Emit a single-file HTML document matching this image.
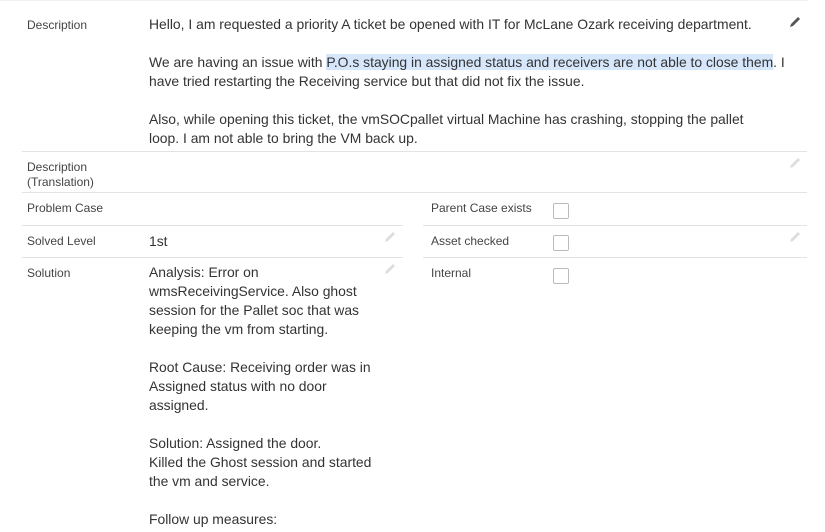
<!DOCTYPE html>
<html><head><style>
body{margin:0;width:825px;height:532px;background:#fff;font-family:"Liberation Sans",sans-serif;color:#333;position:relative;overflow:hidden}
.a{position:absolute;white-space:nowrap}
.l{font-size:12px;color:#444}
.v{font-size:13.9px;color:#333;line-height:19px}
.h{position:absolute;height:1px;background:#e3e3e3}
.cb{position:absolute;width:14px;height:14px;border:1px solid #bbb;border-radius:2px;background:#fff}
.pen{position:absolute}
</style></head><body>
<div class="h" style="left:0;top:0;width:808px;background:#f0f0f0"></div>
<div class="a l" style="left:27px;top:18px">Description</div>
<div class="a v" style="left:149px;top:15px">Hello, I am requested a priority A ticket be opened with IT for McLane Ozark receiving department.</div>
<div class="a v" style="left:149px;top:53px">We are having an issue with <span style="background:#d6e6fb">P.O.s staying in assigned status and receivers are not able to close them</span>. I</div>
<div class="a v" style="left:149px;top:72px">have tried restarting the Receiving service but that did not fix the issue.</div>
<div class="a v" style="left:149px;top:110px">Also, while opening this ticket, the vmSOCpallet virtual Machine has crashing, stopping the pallet</div>
<div class="a v" style="left:149px;top:129px">loop. I am not able to bring the VM back up.</div>
<svg class="pen" style="left:788px;top:15px" width="14" height="14" viewBox="0 0 14 14"><path d="M2 12 L3 9 L10 2 L12 4 L5 11 Z" fill="#555"/></svg>
<div class="h" style="left:22px;top:151px;width:785px"></div>
<div class="a l" style="left:27px;top:160px;line-height:15px">Description<br>(Translation)</div>
<svg class="pen" style="left:788px;top:156px" width="14" height="14" viewBox="0 0 14 14"><path d="M2 12 L3 9 L10 2 L12 4 L5 11 Z" fill="#ddd"/></svg>
<div class="h" style="left:22px;top:192px;width:785px"></div>
<div class="a l" style="left:27px;top:201px">Problem Case</div>
<div class="a l" style="left:431px;top:201px">Parent Case exists</div>
<div class="cb" style="left:553px;top:203px"></div>
<div class="h" style="left:22px;top:225px;width:381px"></div>
<div class="h" style="left:423px;top:225px;width:384px"></div>
<div class="a l" style="left:27px;top:234px">Solved Level</div>
<div class="a v" style="left:149px;top:232px">1st</div>
<svg class="pen" style="left:383px;top:230px" width="14" height="14" viewBox="0 0 14 14"><path d="M2 12 L3 9 L10 2 L12 4 L5 11 Z" fill="#ddd"/></svg>
<div class="a l" style="left:431px;top:234px">Asset checked</div>
<div class="cb" style="left:553px;top:235px"></div>
<svg class="pen" style="left:788px;top:230px" width="14" height="14" viewBox="0 0 14 14"><path d="M2 12 L3 9 L10 2 L12 4 L5 11 Z" fill="#ddd"/></svg>
<div class="h" style="left:22px;top:257px;width:381px"></div>
<div class="h" style="left:423px;top:257px;width:384px"></div>
<div class="a l" style="left:27px;top:266px">Solution</div>
<svg class="pen" style="left:383px;top:262px" width="14" height="14" viewBox="0 0 14 14"><path d="M2 12 L3 9 L10 2 L12 4 L5 11 Z" fill="#ddd"/></svg>
<div class="a l" style="left:431px;top:266px">Internal</div>
<div class="cb" style="left:553px;top:268px"></div>
<div class="a v" style="left:149px;top:263px">Analysis: Error on<br>wmsReceivingService. Also ghost<br>session for the Pallet soc that was<br>keeping the vm from starting.<br><br>Root Cause: Receiving order was in<br>Assigned status with no door<br>assigned.<br><br>Solution: Assigned the door.<br>Killed the Ghost session and started<br>the vm and service.<br><br>Follow up measures:</div>
</body></html>
